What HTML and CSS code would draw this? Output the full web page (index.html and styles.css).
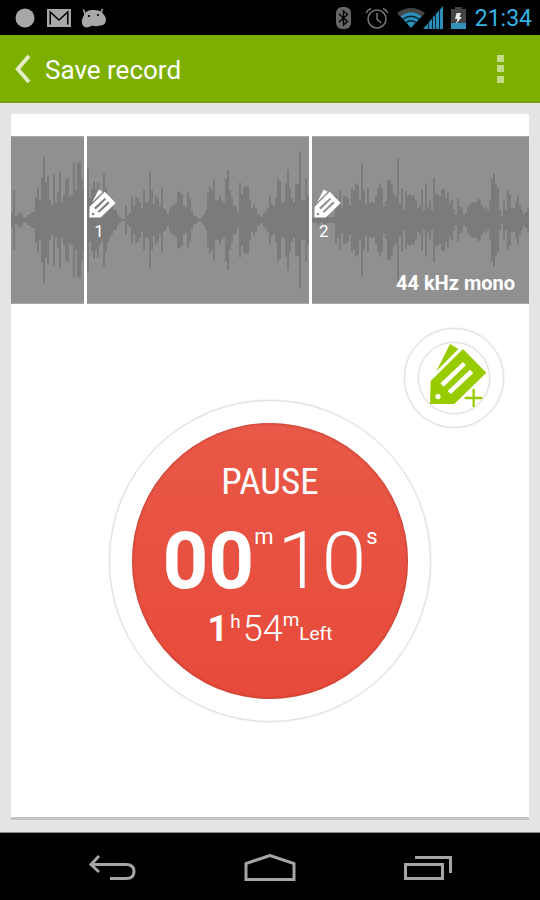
FILE: index.html
```html
<!DOCTYPE html>
<html lang="en">
<head>
<meta charset="utf-8">
<meta name="viewport" content="width=device-width, initial-scale=1">
<title>Save record</title>
<link rel="stylesheet" href="styles.css">
</head>
<body>
<svg class="defs" aria-hidden="true">
  <symbol id="tag" viewBox="103 66 173 186">
    <path d="M165 69L190 84L124 151Z"/>
    <path fill-rule="evenodd" d="M107 180L204 84L274 155L178 249H105ZM136 187L146 197L213 132L204 123ZM158 210L168 219L235 156L225 146ZM129 219a8 8 0 1 0 .1 0Z"/>
  </symbol>
</svg>

<div class="status">
  <div class="status-group notices">
    <svg width="20" height="20" viewBox="0 0 20 20"><circle cx="10" cy="10" r="9.5" fill="#a8a8a8"/></svg>
    <svg width="24" height="18" viewBox="0 0 24 18"><path fill="#a8a8a8" d="M0 0h24v18H0z"/><path d="M3.200 15.500V3L12 11L20.800 3V15.500" fill="none" stroke="#000" stroke-width="1.500"/></svg>
    <svg width="26" height="20" viewBox="0 0 26 20"><path d="M4 6L2.500 1.500M20 5L21.500 1" stroke="#a8a8a8" stroke-width="1.500"/><path d="M2.500 8C4 3 8 2 12.500 2S21 3 23 7C25 9 26 13 23.500 16C21 18 19 17 17 18C14 19 12 17 10 18C7 20 3 20 1.500 17C0 14 1 11 2.500 8Z" fill="#a8a8a8"/><circle cx="8" cy="8" r="1.100"/><circle cx="17" cy="7" r="1.100"/></svg>
  </div>
  <div class="status-group">
    <svg class="bluetooth" width="15" height="22" viewBox="0 0 15 22"><rect width="15" height="22" rx="6" fill="#666"/><path d="M3 7l8.500 7.500L7.500 18V4l4 3.500L3 15" fill="none" stroke="#000" stroke-width="1.400"/></svg>
    <svg class="alarm" width="24" height="22" viewBox="0 0 24 22" fill="none" stroke="#777" stroke-width="1.500"><circle cx="12" cy="12" r="9"/><path d="M12 6v6l4 4M1 6Q3 2.500 6 1.500M18 1.500Q21 2.500 23 6"/></svg>
    <svg class="wifi" width="28" height="20" viewBox="0 0 28 20"><path d="M0 5Q14-5 28 5L24.500 9Q14 1 3.500 9Z" fill="#444"/><path d="M3.500 8.500Q14 0 24.500 8.500L14 20Z" fill="#2b8db8"/><path d="M5.500 11.500Q14 5 22.500 11.500M8.500 15Q14 10.500 19.500 15" fill="none" stroke="#082532" stroke-width="1.300"/></svg>
    <svg class="signal" width="20" height="23" viewBox="0 0 20 23"><path d="M0 23L20 0V23Z" fill="#2b8db8"/><path d="M5.500 15v8M9.500 10v13M12.500 7v16M16.500 3v20" stroke="#082532" stroke-width="1"/></svg>
    <svg class="battery" width="15" height="22" viewBox="0 0 15 22"><path d="M0 2h4V0h7v2h4v14H0z" fill="#444"/><path d="M0 16h15v6H0z" fill="#3193b9"/><path d="M5.500 6H10L8.500 10H11L5 17L6.500 12H4Z" fill="#e8e8e8"/></svg>
    <time class="clock">21:34</time>
  </div>
</div>

<header class="bar">
  <a class="up" href="#">
    <svg width="16" height="30" viewBox="0 0 16 30"><path d="M14 2L2.800 15L14 28" fill="none" stroke="#e2edc4" stroke-width="4"/></svg>
    <span>Save record</span>
  </a>
  <button class="more" type="button" aria-label="More options">
    <svg width="7" height="28" viewBox="0 0 7 28" fill="#c4dc88"><path d="M0 0h7v7H0zM0 10h7v7H0zM0 21h7v7H0z"/></svg>
  </button>
</header>

<main class="page">
  <section class="card">
    <div class="wave">
      <svg class="wave-bars" viewBox="0 0 518 168" preserveAspectRatio="none" aria-hidden="true"><path id="bars"/></svg>
      <div class="mark first"><svg width="27" height="29"><use href="#tag"/></svg><span>1</span></div>
      <div class="mark second"><svg width="27" height="29"><use href="#tag"/></svg><span>2</span></div>
      <p class="format">44 kHz mono</p>
    </div>
    <button class="add" type="button" aria-label="Add tag">
      <span class="add-ring">
        <svg width="57" height="63" viewBox="105 69 171 189"><use href="#tag" x="103" y="66" width="173" height="186"/><path d="M209 231h53M236 204v54" fill="none" stroke="#fff" stroke-width="12"/><path d="M209 231h53M236 204v54" stroke="#99cc00" stroke-width="7"/></svg>
      </span>
    </button>
    <button class="record" type="button">
      <span class="record-face">
        <span class="action">PAUSE</span>
        <span class="elapsed"><b>00</b><small>m</small><i>10</i><small>s</small></span>
        <span class="left"><b>1</b><small class="hours">h</small><i>54</i><small>m</small><em>Left</em></span>
      </span>
    </button>
  </section>
</main>

<nav class="nav">
  <button type="button" aria-label="Back"><svg width="48" height="28" viewBox="0 0 48 28"><path d="M11 2L3 10.500L11 18M3 10.500H38Q46 10.500 46 17.500T38 24.500H22"/></svg></button>
  <button type="button" aria-label="Home"><svg width="52" height="28" viewBox="0 0 52 28"><path d="M2 25.500V9.500L26 1.500L50 9.500V25.500Z"/></svg></button>
  <button type="button" aria-label="Recent apps"><svg width="48" height="28" viewBox="0 0 48 28"><path d="M1.500 10.500H38.500V24.500H1.500ZM11 3.500H46.500V19"/></svg></button>
</nav>
<script src="wave.js"></script>
</body>
</html>
```
FILE: styles.css
```css
* { box-sizing: border-box; }
body {
  margin: 0;
  min-height: 100vh;
  display: flex;
  flex-direction: column;
  background: #e4e4e4;
  font-family: Roboto, "Liberation Sans", sans-serif;
}
button {
  padding: 0;
  border: 0;
  background: none;
  font: inherit;
  color: inherit;
}
svg { display: block; flex: none; }
.defs { position: absolute; width: 0; height: 0; }

.status {
  display: flex;
  justify-content: space-between;
  align-items: center;
  height: 35px;
  padding: 0 8px 0 15px;
  background: #000;
}
.status-group { display: flex; align-items: center; }
.notices { gap: 10px; }
.notices svg:first-child { margin-right: 2px; }
.alarm { margin-left: 14px; }
.wifi { margin-left: 8px; }
.signal { margin-left: -2px; }
.battery { margin: 0 9px 0 8px; }
.clock { padding-top: 2px; font-size: 23px; line-height: 33px; color: #33b5e5; }

.bar {
  display: flex;
  justify-content: space-between;
  align-items: center;
  height: 68px;
  padding: 2px 36px 0 15px;
  background: #7daf00;
  border-bottom: 2px solid #72a010;
}
.up {
  display: flex;
  align-items: center;
  gap: 14px;
  color: #fff;
  font-size: 26px;
  text-decoration: none;
}
.up span { padding-top: 2px; }

.page { flex: 1; display: flex; padding: 11px 11px 12px; }
.card {
  flex: 1;
  display: flex;
  flex-direction: column;
  padding: 22px 0;
  background: #fff;
  border-bottom: 3px solid #c4c4c4;
}
.wave {
  position: relative;
  height: 168px;
  background: #909090;
  border: solid #aaa;
  border-width: 1px 0;
  color: #fff;
}
.wave-bars { width: 100%; height: 100%; fill: #7b7b7b; }
.mark {
  position: absolute;
  top: -1px;
  bottom: -1px;
  padding: 53px 0 0 2px;
  border-left: 3px solid #fff;
  font-size: 17px;
  line-height: 26px;
  text-align: center;
}
.mark svg { fill: #fff; }
.mark span { display: block; padding: 0 7px 0 0; }
.first { left: 14.1%; }
.second { left: 57.5%; }
.format {
  position: absolute;
  right: 14px;
  bottom: 8px;
  margin: 0;
  font-size: 20px;
  font-weight: 700;
  line-height: 24px;
}

.add, .record, .add-ring, .record-face {
  display: flex;
  align-items: center;
  justify-content: center;
  border-radius: 50%;
}
.add, .record, .add-ring {
  border: 1px solid #e0e0e0;
  background: #fff;
  box-shadow: 0 0 2px #ddd;
}
.add {
  align-self: flex-end;
  width: 100px;
  height: 100px;
  margin: 24px 25px 0 0;
}
.add-ring { width: 72px; height: 72px; }
.add-ring svg { margin: -6px -8px 0 0; fill: #99cc00; }
.record {
  align-self: center;
  width: 322px;
  height: 322px;
  margin-top: -28px;
}
.record-face {
  flex-direction: column;
  justify-content: flex-start;
  width: 276px;
  height: 276px;
  padding-top: 36px;
  background: linear-gradient(#e95848, #e74a3a);
  box-shadow: inset 0 0 3px #a83226;
  color: #fff;
}
.action {
  font-family: "Roboto Condensed", Roboto, sans-serif;
  font-size: 37px;
  line-height: 46px;
}
.elapsed, .left { display: flex; }
.elapsed { margin-top: 10px; font-size: 80px; line-height: 92px; }
.left { margin-top: 2px; font-size: 36px; line-height: 40px; }
b { font-weight: 700; }
i { font-style: normal; font-weight: 300; }
small { font-size: 22px; line-height: 44px; }
.elapsed i { margin-left: 4px; }
.left small { font-size: 19px; line-height: 22px; }
.left .hours { margin: 0 2px; line-height: 26px; }
.left em { align-self: flex-end; font-size: 19px; line-height: 30px; font-style: normal; }

.nav {
  display: flex;
  justify-content: center;
  align-items: center;
  gap: 108px;
  height: 68px;
  padding-top: 2px;
  background: #000;
  border-top: 1px solid #888;
}
.nav svg { fill: none; stroke: #a5a5a5; stroke-width: 3; }
```
FILE: wave.js
```js
// Peak height of each 2-unit slice of the recording, left to right.
const peaks = [
  8,30,4,6,8,5,2,3,5,6,8,8,23,33,20,43,64,38,45,20,15,46,18,28,49,18,26,41,43,24,
  26,58,30,58,59,41,32,26,52,22,32,39,30,38,25,22,47,32,22,18,14,10,10,5,3,1,1,15,5,7,
  24,14,23,22,18,12,30,18,18,48,30,16,25,22,14,32,12,10,6,12,14,15,17,29,28,26,14,13,28,22,
  9,4,4,2,1,3,5,10,28,34,30,41,20,20,25,20,18,42,51,30,22,15,14,8,38,26,34,34,34,21,
  12,16,12,6,5,3,7,9,12,24,16,14,22,42,39,17,18,37,51,32,22,18,37,37,69,20,20,42,25,25,
  2,3,3,5,3,2,4,4,3,3,3,3,25,18,30,13,24,24,22,15,33,30,37,35,20,57,30,16,33,18,
  18,17,25,32,37,32,14,19,40,41,36,27,24,62,17,32,10,29,25,26,25,25,20,12,15,31,10,37,13,20,
  10,43,27,26,24,31,32,22,28,17,21,11,5,22,14,13,5,7,14,16,18,18,18,22,20,15,12,13,10,20,
  42,47,36,33,10,4,19,10,30,26,12,12,19,25,15,10,6,8,12
];
const middle = 84;
document.getElementById("bars").setAttribute(
  "d",
  peaks.map((h, i) => `M${i * 2} ${middle - h}h2v${h * 2}h-2z`).join("")
);
```
